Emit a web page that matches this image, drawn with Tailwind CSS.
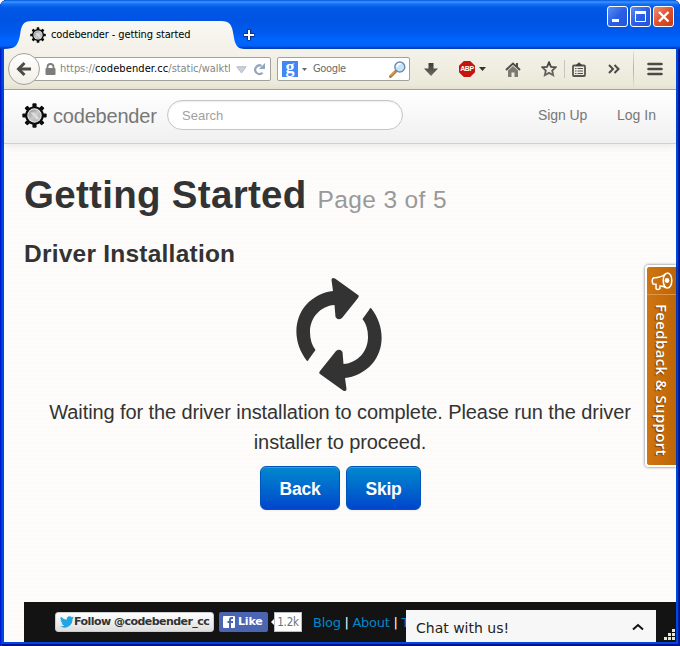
<!DOCTYPE html>
<html lang="en">
<head>
<meta charset="utf-8">
<title>codebender - getting started</title>
<script src="https://cdn.jsdelivr.net/npm/@tailwindcss/browser@4"></script>
</head>
<body class="m-0 overflow-hidden bg-white font-['Liberation_Sans',sans-serif]">
<svg width="0" height="0" class="absolute">
  <defs>
    <linearGradient id="disc" x1="0" y1="0" x2="1" y2="1"><stop offset="0" stop-color="#8c8c8c"/><stop offset=".5" stop-color="#c9c9c9"/><stop offset="1" stop-color="#a8a8a8"/></linearGradient>
    <symbol id="gear" viewBox="0 0 24 24">
      <g fill="#0c0c0c">
        <circle cx="12" cy="12" r="9"/>
        <g id="teeth"><rect x="10" y=".3" width="4" height="23.400" rx="1"/><rect x=".3" y="10" width="23.400" height="4" rx="1"/></g>
        <use href="#teeth" transform="rotate(45 12 12)"/>
      </g>
      <circle cx="12" cy="12" r="6.900" fill="#efefef"/>
      <circle cx="12" cy="12" r="6" fill="url(#disc)"/>
      <path d="M8 9l4 0 5 6-3 1z" fill="#dcdcdc"/>
    </symbol>
    <linearGradient id="ic" x1="0" y1="0" x2="0" y2="1"><stop offset="0" stop-color="#3c3c38"/><stop offset="1" stop-color="#6c6b66"/></linearGradient>
  </defs>
</svg>
<div class="relative flex h-[646px] w-[680px] flex-col overflow-hidden rounded-t-[7px] bg-[#0046e0] shadow-[inset_1px_0_0_#0019cf,inset_2px_0_0_#0831d9,inset_-1px_0_0_#00138c,inset_-2px_0_0_#001ea0,inset_0_-2px_0_#00138c]">

  <!-- title bar -->
  <header class="flex h-[49px] shrink-0 items-start bg-[linear-gradient(180deg,#0058e0_0,#3d95ff_2px,#1470f4_4px,#0058e6_8px,#0054e3_20px,#0059ee_32px,#0066ff_40px,#0062fb_46px,#003dbb_48px,#003dbb_49px)] pl-1">
    <div class="relative mt-[21px] h-7 w-[241px]">
      <svg class="absolute inset-0" width="241" height="28"><defs><linearGradient id="tab" x1="0" y1="0" x2="0" y2="1"><stop offset="0" stop-color="#f9f8f4"/><stop offset="1" stop-color="#f3f1e8"/></linearGradient></defs><path d="M0 28C11 28 14 25 16 14C17.500 4 19 0 28 0H217C226 0 228 4 229.500 14C231 24 233 28 241 28Z" fill="url(#tab)"/></svg>
      <div class="relative flex h-7 items-center pl-[26px]">
        <svg width="16" height="16"><use href="#gear"/></svg>
        <span class="ml-[5px] whitespace-nowrap font-['DejaVu_Sans_Condensed','DejaVu_Sans',sans-serif] text-[11px] tracking-[-0.120px] text-black">codebender - getting started</span>
      </div>
    </div>
    <svg class="mt-[29px] -ml-[2px]" width="12" height="12"><path d="M6 .5V11.500M.5 6H11.500" stroke="#0a2f80" stroke-width="4"/><path d="M6 1V11M1 6H11" stroke="#fff" stroke-width="2"/></svg>
    <div class="mt-[6px] mr-[6px] ml-auto flex gap-[2px]">
      <span class="h-[21px] w-[21px] rounded-[3px] border border-white bg-linear-to-br from-[#5b8df5] via-[#2a5fe6] to-[#2254d8]"><svg width="19" height="19"><path d="M4 13.500h7" stroke="#fff" stroke-width="3"/></svg></span>
      <span class="h-[21px] w-[21px] rounded-[3px] border border-white bg-linear-to-br from-[#5b8df5] via-[#2a5fe6] to-[#2254d8]"><svg width="19" height="19"><path d="M4.500 5v9.500h10V5M4 5.500h11" stroke="#fff" fill="none"/><path d="M4 5.500h11" stroke="#fff" stroke-width="3"/></svg></span>
      <span class="h-[21px] w-[21px] rounded-[3px] border border-white bg-linear-to-br from-[#ee9078] via-[#e0502b] to-[#c93a10]"><svg width="19" height="19"><path d="M5 5l9.500 9.500M14.500 5L5 14.500" stroke="#fff" stroke-width="2.300"/></svg></span>
    </div>
  </header>

  <!-- navigation toolbar -->
  <div class="mx-1 flex h-[41px] shrink-0 items-center border-b border-[#aaa89e] bg-linear-to-b from-[#f4f2ea] to-[#ebe8d8]">
    <span class="z-10 ml-1 flex h-8 w-8 shrink-0 items-center justify-center rounded-full border border-[#a3a19b] bg-linear-to-b from-white to-[#f1efe6]"><svg width="16" height="16"><path d="M8.500 2L2.500 8l6 6" fill="none" stroke="#4c4b46" stroke-width="3"/><path d="M3 8h12" stroke="#4c4b46" stroke-width="3"/></svg></span>
    <div class="-ml-2 flex h-6 w-[239px] shrink-0 items-center rounded-[2px] border border-[#a3a19b] bg-white pt-px pl-[12px] font-['DejaVu_Sans_Condensed','DejaVu_Sans',sans-serif] text-[11px] text-[#858585]">
      <svg width="11" height="12" class="-mt-px shrink-0"><path d="M2.500 6V4a3 3 0 0 1 6 0v2" fill="none" stroke="#7d7d7d" stroke-width="1.800"/><rect x=".5" y="5" width="10" height="7" rx="1" fill="#7d7d7d"/></svg>
      <span class="ml-[4px] w-[170px] overflow-hidden whitespace-nowrap tracking-[-0.050px]">https://<span class="tracking-[0.100px] text-black">codebender.cc</span>/static/walkth</span>
      <svg class="ml-[6px] shrink-0" width="11" height="8"><path d="M.8.800h9.400L5.500 7z" fill="#ccd2dc" stroke="#b4bbc8"/></svg>
      <svg class="ml-[6px] shrink-0" width="13" height="13"><path d="M9.500 9.800A4.300 4.300 0 1 1 8.500 2.900" fill="none" stroke="#95a5bf" stroke-width="2.200"/><path d="M12 0v6H6z" fill="#95a5bf"/></svg>
    </div>
    <div class="ml-[6px] flex h-6 w-[133px] shrink-0 items-center rounded-[2px] border border-[#a3a19b] bg-white pl-1 text-[#6a6a6a]">
      <span class="flex h-4 w-4 items-center justify-center bg-[#4285f4] pb-[4px] font-['Liberation_Serif',serif] text-[18px] leading-4 font-bold text-white">g</span>
      <svg class="ml-[4px]" width="5" height="3"><path d="M0 0h5L2.500 3z" fill="#666"/></svg>
      <span class="ml-[6px] pt-px font-['DejaVu_Sans_Condensed','DejaVu_Sans',sans-serif] text-[11px] tracking-[-0.350px]">Google</span>
      <svg class="ml-auto mr-[3px]" width="17" height="17"><path d="M1.500 15.500L7 10" stroke="#b9792f" stroke-width="3" stroke-linecap="round"/><path d="M1.800 14.600L6 10.500" stroke="#efb567"/><circle cx="10.800" cy="6" r="5" fill="#c5e4fb" stroke="#718bab" stroke-width="1.400"/><path d="M8 6a3 3 0 0 1 4-3" stroke="#fff" stroke-width="1.500" fill="none"/></svg>
    </div>
    <svg class="ml-[14px] shrink-0" width="14" height="15"><path d="M4.500 1h5v5.500H14L7 14 0 6.500h4.500z" fill="url(#ic)"/></svg>
    <span class="ml-[21px] flex h-4 w-4 shrink-0 items-center justify-center bg-[#c3140d] text-[7px] font-bold tracking-[-0.400px] text-white [clip-path:polygon(30%_0,70%_0,100%_30%,100%_70%,70%_100%,30%_100%,0_70%,0_30%)]">ABP</span>
    <svg class="ml-[4px] shrink-0" width="7" height="4"><path d="M0 0h7L3.500 4z" fill="#33322e"/></svg>
    <svg class="ml-[19px] shrink-0" width="16" height="15"><path d="M1 8l7-6.500L15 8" fill="none" stroke="#4e4d48" stroke-width="2"/><path d="M11 1h2v4h-2z" fill="#4e4d48"/><path d="M3 8.500L8 4l5 4.500V15H9.500v-4.500h-3V15H3z" fill="#7a7972"/></svg>
    <svg class="ml-[20px] shrink-0" width="16" height="16"><path d="M8 1.500l2 4.300 4.700.5-3.500 3.200 1 4.700L8 11.900l-4.200 2.300 1-4.700L1.300 6.300 6 5.800z" fill="none" stroke="url(#ic)" stroke-width="1.800"/></svg>
    <span class="ml-[7px] h-[18px] w-px shrink-0 bg-[#c6c4bb]"></span>
    <svg class="ml-[7px] shrink-0" width="14" height="15"><rect x="1" y="3.500" width="12" height="10.500" rx="1" fill="none" stroke="#55544f" stroke-width="1.800"/><path d="M4 3.500L7 .8l3 2.700z" fill="#3f3e3a" stroke="#3f3e3a"/><path d="M3 6.500h1.500M5.500 6.500H11M3 9h1.500M5.500 9H11M3 11.500h1.500M5.500 11.500H11" stroke="#55544f" stroke-width="1.200"/></svg>
    <svg class="ml-[22px] shrink-0" width="12" height="10"><path d="M1 1l4 4-4 4M6.500 1l4 4-4 4" fill="none" stroke="#4b4a45" stroke-width="2"/></svg>
    <span class="ml-[13px] h-9 w-px shrink-0 bg-linear-to-b from-[#e3e1d7] via-[#aeb0b2] to-[#e3e1d7]"></span>
    <svg class="ml-[13px] shrink-0" width="16" height="14"><path d="M1.500 2h13M1.500 7h13M1.500 12h13" stroke="#4b4a45" stroke-width="2.600" stroke-linecap="round"/></svg>
  </div>

  <!-- page -->
  <main class="relative mx-1 mb-1 flex min-h-0 flex-1 flex-col bg-[#fcfbf9] bg-[repeating-linear-gradient(0deg,#fdfcfa_0,#fdfcfa_2px,#fcfbf9_2px,#fcfbf9_4px)] text-[#333]">
    <nav class="flex h-[54px] shrink-0 items-center border-b border-[#d0d0d0] bg-linear-to-b from-white to-[#f0f0f0] pb-[3px] pl-[18px] text-[14px] text-[#777] shadow-[0_1px_8px_rgba(0,0,0,0.1)]">
      <svg width="25" height="25" class="shrink-0"><use href="#gear"/></svg>
      <span class="ml-[6px] w-[104px] pt-[2px] whitespace-nowrap text-[20px] tracking-[-0.200px]">codebender</span>
      <span class="ml-[10px] flex h-[30px] w-[236px] items-center rounded-full border border-[#c6c6c6] bg-white pt-px pl-[14px] text-[13px] tracking-[0.020px] text-[#a0a0a0] shadow-[inset_0_1px_2px_rgba(0,0,0,0.080)]">Search</span>
      <span class="ml-[135px] w-[49px] whitespace-nowrap tracking-[-0.100px]">Sign Up</span>
      <span class="ml-[30px] whitespace-nowrap">Log In</span>
    </nav>
    <section class="h-[458px] px-5 pt-[31px]">
      <h1 class="h-10 whitespace-nowrap text-[38.500px] leading-10 font-bold tracking-[0.300px]">Getting Started <small class="text-[24.500px] font-normal tracking-[0.360px] text-[#999]">Page 3 of 5</small></h1>
      <h3 class="mt-[19px] h-10 text-[24.500px] leading-10 font-bold tracking-[0.230px]">Driver Installation</h3>
      <div class="flex flex-col items-center">
        <svg class="mt-[4px] ml-[-3px]" width="86" height="114"><g id="arrow"><path d="M11 83C-3 65 -3 42 10 27C18 18 28 14 37 13L35.500 2Q35.500-1 39 .5L62 17Q63.500 18 62 20L46 40Q42 43 39.500 39L38.500 27C24 28 14 40 14 54Q14 65 19.500 72L13 81Q12 83.500 11 83Z" fill="#333"/></g><use href="#arrow" transform="rotate(180 43 56.500)"/></svg>
        <p class="mt-[5px] w-[600px] text-center text-[20px] leading-[30px] tracking-[-0.100px]">Waiting for the driver installation to complete. Please run the driver installer to proceed.</p>
        <div class="mt-[9px] ml-[1px] flex gap-[6px] text-[17.500px] font-bold tracking-[-0.200px] text-white">
          <span class="flex h-11 w-[80px] items-center justify-center rounded-[6px] border border-[#0055b8] bg-linear-to-b from-[#0088cc] to-[#0044cc] pt-[2px] shadow-[inset_0_1px_0_rgba(255,255,255,0.2),0_1px_2px_rgba(0,0,0,0.050)]">Back</span>
          <span class="flex h-11 w-[75px] items-center justify-center rounded-[6px] border border-[#0055b8] bg-linear-to-b from-[#0088cc] to-[#0044cc] pt-[2px] shadow-[inset_0_1px_0_rgba(255,255,255,0.2),0_1px_2px_rgba(0,0,0,0.050)]">Skip</span>
        </div>
      </div>
    </section>
    <footer class="ml-5 flex h-10 shrink-0 items-center overflow-hidden bg-[#131313] pl-[31px] font-['DejaVu_Sans',sans-serif] text-[12px]">
      <span class="flex h-5 w-[159px] shrink-0 items-center rounded-[3px] border border-[#ccc] bg-linear-to-b from-white to-[#dedede] pl-1 text-[11px] font-bold text-[#333]">
        <svg width="14" height="12" viewBox="0 0 24 20" class="shrink-0"><path fill="#1fa5e6" d="M24 2.400a10 10 0 0 1-2.800.8A5 5 0 0 0 23.300.5a10 10 0 0 1-3.100 1.200 4.900 4.900 0 0 0-8.400 4.500A14 14 0 0 1 1.700 1a4.900 4.900 0 0 0 1.500 6.600A5 5 0 0 1 1 7a4.900 4.900 0 0 0 3.900 4.900 5 5 0 0 1-2.200.1 4.900 4.900 0 0 0 4.600 3.400A10 10 0 0 1 0 17.400 14 14 0 0 0 21.500 5z"/></svg>
        <span class="whitespace-nowrap tracking-[-0.540px]">Follow @codebender_cc</span>
      </span>
      <span class="ml-[5px] flex h-5 w-[49px] shrink-0 items-center rounded-[2px] bg-[#4b65b2] pl-1 text-[11px] font-bold text-white">
        <svg width="12" height="12" class="shrink-0"><rect width="12" height="12" rx="1" fill="#fff"/><path d="M8 12V7h2V5H8V4q0-1 1-1h1V1H8.500Q6 1 6 4v1H4.500v2H6v5z" fill="#4b65b2"/></svg>
        <span class="ml-[3px] tracking-[-0.200px]">Like</span>
      </span>
      <svg class="ml-[3px] shrink-0" width="4" height="8"><path d="M4 0L0 4l4 4z" fill="#fff"/></svg>
      <span class="-ml-px flex h-5 w-7 shrink-0 items-center justify-center border border-[#b8bdc8] bg-white pt-px font-['DejaVu_Sans_Condensed','DejaVu_Sans',sans-serif] text-[11.500px] tracking-[-0.250px] text-[#6a7180]">1.2k</span>
      <span class="ml-[11px] whitespace-nowrap pt-px text-[13px] tracking-[-0.270px] text-white"><span class="text-[#0088cc]">Blog</span> | <span class="text-[#0088cc]">About</span> | <span class="text-[#0088cc]">T</span></span>
    </footer>

    <!-- chat launcher -->
    <div class="absolute right-[20px] bottom-0 flex h-8 w-[250px] items-center bg-[#f7f7f7] pt-[4px] pr-[12px] pl-[10px] font-['DejaVu_Sans',sans-serif] text-[14px] text-[#222]">Chat with us!<svg class="ml-auto -mt-[2px]" width="12" height="8"><path d="M1 6.500L6 2l5 4.500" fill="none" stroke="#111" stroke-width="2"/></svg></div>
    <svg class="absolute right-0 bottom-[1px]" width="12" height="12" fill="#e9e5d3"><rect x="8" y="0" width="3" height="3"/><rect x="4" y="4" width="3" height="3"/><rect x="8" y="4" width="3" height="3"/><rect x="0" y="8" width="3" height="3"/><rect x="4" y="8" width="3" height="3"/><rect x="8" y="8" width="3" height="3"/></svg>

    <!-- feedback tab -->
    <div class="absolute top-[175px] right-0 flex h-[202px] w-[31px] flex-col items-center rounded-l-[4px] border-2 border-r-0 border-white bg-linear-to-r from-[#d07512] to-[#bd6505] text-white shadow-[0_0_3px_rgba(0,0,0,0.600)]">
      <span class="flex h-7 w-full shrink-0 items-center justify-center border-b border-[#de9548]"><svg width="22" height="20" fill="none" stroke="#fff" stroke-width="1.500"><path d="M2 7q-1.500 3 0 6l3 .3v4.200q1.500 2 4 0v-2.500q3-.5 6 2M15 2.500Q11 6.500 2 7"/><ellipse cx="16.500" cy="9.500" rx="4.300" ry="7.500"/><circle cx="16" cy="9.500" r="1.700" fill="#fff"/></svg></span>
      <span class="mt-[9px] whitespace-nowrap font-['Open_Sans',sans-serif] text-[15px] leading-[28px] font-semibold tracking-[0.350px] [writing-mode:vertical-rl] [text-shadow:1px_1px_1px_#7a4000]">Feedback &amp; Support</span>
    </div>
  </main>
</div>
</body>
</html>
